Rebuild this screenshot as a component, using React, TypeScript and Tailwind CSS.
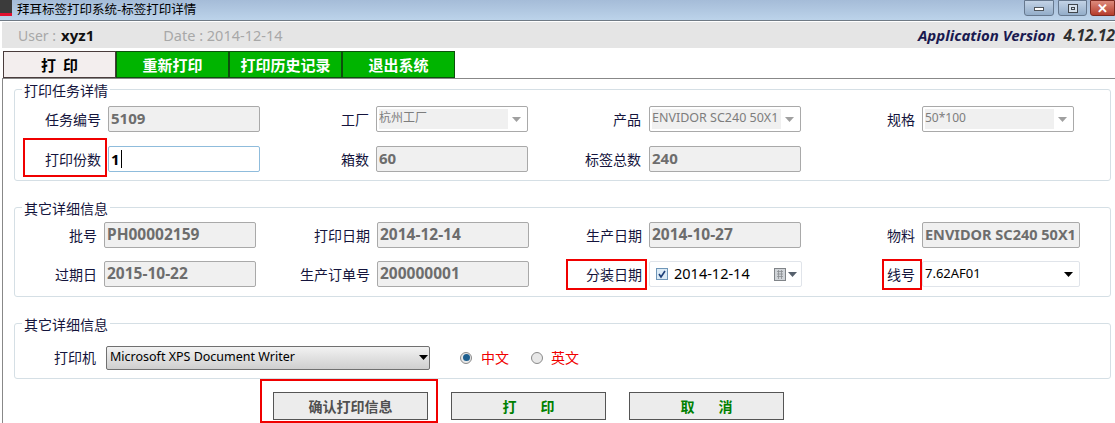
import type { ReactNode } from "react";

const cjk = "font-['Noto_Sans_CJK_SC','Noto_Sans',sans-serif]";
const latin = "font-['Noto_Sans','Noto_Sans_CJK_SC',sans-serif]";

function Arrow({ color = "#000" }: { color?: string }) {
  return (
    <svg width="9" height="5" viewBox="0 0 9 5">
      <path d="M0 0h9L4.5 5z" fill={color} />
    </svg>
  );
}

function Label({ width, gap = 7, children }: { width: number; gap?: number; children: ReactNode }) {
  return (
    <div
      className={`${cjk} shrink-0 text-right text-[14px] leading-[27px] text-[#14143c]`}
      style={{ width, marginRight: gap }}
    >
      {children}
    </div>
  );
}

function ReadOnly({ value, large }: { value: string; large?: boolean }) {
  return (
    <div
      className={`${latin} ${large ? "text-[15.5px]" : "text-[15px]"} h-[26px] w-[152px] shrink-0 overflow-hidden whitespace-nowrap rounded-[2px] border border-[#a9a9a9] bg-[#f0f0f0] pl-[2px] font-bold leading-[23px] text-[#6d6d6d]`}
    >
      {value}
    </div>
  );
}

function DisabledSelect({ value, large }: { value: string; large?: boolean }) {
  return (
    <div className="flex h-[26px] w-[152px] shrink-0 items-stretch rounded-[2px] border border-[#a9a9a9] bg-white p-[2px]">
      <div
        className={`${latin} ${large ? "text-[12.5px]" : "text-[12px]"} w-[129px] overflow-hidden whitespace-nowrap bg-[#f0f0f0] leading-[18px] text-[#7d7d7d]`}
      >
        {value}
      </div>
      <div className="flex flex-1 items-center justify-center">
        <Arrow color="#a0a0a0" />
      </div>
    </div>
  );
}

function Group({ title, className, children }: { title: string; className: string; children: ReactNode }) {
  return (
    <section className={`relative ml-[11px] w-[1097px] shrink-0 rounded-[3px] border border-[#d5dfe5] ${className}`}>
      <span className={`${cjk} absolute left-[7px] top-[-9px] bg-white px-[2px] text-[14px] leading-[19px] text-[#14143c]`}>
        {title}
      </span>
      {children}
    </section>
  );
}

function RedBox({ className }: { className: string }) {
  return <div className={`pointer-events-none absolute border-[2px] border-[#f00000] ${className}`} />;
}

function Radio({ checked }: { checked?: boolean }) {
  return (
    <span className="flex h-[12px] w-[12px] items-center justify-center rounded-full border border-[#8a8a8a] bg-[#e8e8e8]">
      {checked && <span className="h-[7px] w-[7px] rounded-full bg-[#1d5f8f]" />}
    </span>
  );
}

function ActionButton({ children, className }: { children: ReactNode; className: string }) {
  return (
    <button
      className={`${cjk} h-[28px] w-[155px] shrink-0 border border-[#555] bg-[#ececec] text-[14px] font-bold leading-[26px] ${className}`}
    >
      {children}
    </button>
  );
}

const tabs = ["重新打印", "打印历史记录", "退出系统"];

export default function App() {
  return (
    <div className="relative flex h-[423px] w-[1115px] flex-col overflow-hidden bg-white">
      {/* title bar */}
      <div className="flex h-[21px] shrink-0 items-start border-b border-[#6f7a85] bg-gradient-to-b from-[#a5bcd8] to-[#bcd3ea]">
        <div className="flex h-[16px] w-[12px] shrink-0 flex-col">
          <div className="flex-1 bg-[#3b3b3b]" />
          <div className="h-[3px] bg-[#e0102f]" />
        </div>
        <span className={`${cjk} ml-[5px] text-[12.5px] leading-[18px] text-black`}>拜耳标签打印系统-标签打印详情</span>
        <div className="ml-auto flex">
          <div className="mr-[4px] flex h-[16px] w-[30px] items-center justify-center rounded-b-[3px] border border-[#66788e] bg-gradient-to-b from-[#c3d3e6] to-[#93adc9]">
            <div className="mt-[2px] h-[4px] w-[10px] border border-[#50565c] bg-white" />
          </div>
          <div className="mr-[3px] flex h-[16px] w-[29px] items-center justify-center rounded-b-[3px] border border-[#66788e] bg-gradient-to-b from-[#c3d3e6] to-[#93adc9]">
            <div className="flex h-[9px] w-[10px] items-center justify-center border border-[#40464c] bg-[#d5e0ec]">
              <div className="h-[3px] w-[4px] border border-[#40464c]" />
            </div>
          </div>
          <div className="flex h-[16px] w-[25px] items-center justify-center rounded-bl-[3px] border border-[#7d2a20] bg-gradient-to-b from-[#dd8a7c] to-[#b53c2c] text-[13px] font-bold leading-none text-white">
            ✕
          </div>
        </div>
      </div>

      {/* user bar */}
      <div className={`${latin} ml-[2px] mt-[1px] flex h-[26px] shrink-0 items-center whitespace-nowrap bg-[#e5e5e5] pt-[1px] text-[14px]`}>
        <span className="ml-[16px] text-[#a8a8a8]">User :</span>
        <span className="ml-[5px] text-[15px] font-bold text-[#101010]">xyz1</span>
        <span className="ml-[69px] text-[14.5px] text-[#a8a8a8]">Date : 2014-12-14</span>
        <span className="ml-auto text-[15px] font-bold italic text-[#1a1a50]">Application Version</span>
        <span className="ml-[8px] text-[15.5px] font-bold italic text-[#303030]">4.12.12</span>
      </div>

      {/* tabs */}
      <div className={`${cjk} ml-[3px] mt-[3px] flex h-[27px] shrink-0 text-[15px] font-bold`}>
        <div className="h-full w-[113px] border border-[#4a3c3c] bg-[#f3eeee] text-center leading-[25px] text-black">打&nbsp;&nbsp;印</div>
        {tabs.map((t) => (
          <div
            key={t}
            className="h-full w-[113px] border border-[#0c4f0c] bg-[#00b400] text-center leading-[25px] text-white"
          >
            {t}
          </div>
        ))}
      </div>

      {/* main panel */}
      <div className="ml-[2px] flex flex-1 flex-col border-l border-t border-[#888888] pt-[10px]">
        <Group title="打印任务详情" className="h-[92px]">
          <div className="mt-[16px] flex">
            <Label width={86}>任务编号</Label>
            <ReadOnly value="5109" />
            <Label width={109}>工厂</Label>
            <DisabledSelect value="杭州工厂" />
            <Label width={113} gap={8}>产品</Label>
            <DisabledSelect value="ENVIDOR SC240 50X1" large />
            <Label width={114}>规格</Label>
            <DisabledSelect value="50*100" />
          </div>
          <div className="mt-[13px] flex">
            <Label width={86}>打印份数</Label>
            <div
              className={`${latin} flex h-[26px] w-[152px] shrink-0 items-center rounded-[2px] border border-[#8fbcdc] bg-white pl-[2px] text-[15px] font-bold text-black`}
            >
              1<span className="ml-[1px] h-[18px] w-px bg-black" />
            </div>
            <Label width={109}>箱数</Label>
            <ReadOnly value="60" />
            <Label width={113} gap={8}>标签总数</Label>
            <ReadOnly value="240" />
          </div>
          <RedBox className="left-[8px] top-[48px] h-[39px] w-[84px]" />
        </Group>

        <Group title="其它详细信息" className="mt-[26px] h-[90px]">
          <div className="mt-[14px] flex">
            <Label width={82}>批号</Label>
            <ReadOnly value="PH00002159" large />
            <Label width={114} gap={7}>打印日期</Label>
            <ReadOnly value="2014-12-14" large />
            <Label width={113} gap={7}>生产日期</Label>
            <ReadOnly value="2014-10-27" large />
            <Label width={114}>物料</Label>
            <div className="w-[158px] shrink-0">
              <div
                className={`${latin} h-[26px] overflow-hidden whitespace-nowrap rounded-[2px] border border-[#a9a9a9] bg-[#f0f0f0] pl-[2px] text-[14.5px] font-bold leading-[23px] text-[#6d6d6d]`}
              >
                ENVIDOR SC240 50X1
              </div>
            </div>
          </div>
          <div className="mt-[12px] flex">
            <Label width={82}>过期日</Label>
            <ReadOnly value="2015-10-22" large />
            <Label width={114} gap={7}>生产订单号</Label>
            <ReadOnly value="200000001" large />
            <Label width={113} gap={7}>分装日期</Label>
            <div
              className={`${latin} flex h-[26px] w-[153px] shrink-0 items-center rounded-[2px] border border-[#e0e4ea] bg-white pl-[6px] text-[14.5px] text-black`}
            >
              <span className="flex h-[12px] w-[12px] items-center justify-center border border-[#6f96b8] bg-[#dcebf6]">
                <svg width="10" height="10" viewBox="0 0 10 10">
                  <path d="M2 5l2 3 4-6" fill="none" stroke="#1c3f78" strokeWidth="1.6" />
                </svg>
              </span>
              <span className="ml-[6px]">2014-12-14</span>
              <svg className="ml-[24px]" width="12" height="13" viewBox="0 0 12 13">
                <rect x="0.5" y="0.5" width="11" height="12" fill="#d0d4d8" stroke="#808488" />
                <path d="M3 3.5h6M3 6h6M3 8.5h6M4.5 2v9M7.5 2v9" stroke="#8a8e92" strokeWidth="0.8" />
              </svg>
              <span className="ml-[2px] flex">
                <Arrow color="#56606c" />
              </span>
            </div>
            <Label width={113}>线号</Label>
            <div
              className={`${latin} flex h-[26px] w-[158px] shrink-0 items-center rounded-[2px] border border-[#e0e4ea] bg-white pl-[2px] pr-[6px] text-[13px] text-black`}
            >
              7.62AF01
              <span className="ml-auto flex">
                <Arrow />
              </span>
            </div>
          </div>
          <RedBox className="left-[551px] top-[51px] h-[31px] w-[81px]" />
          <RedBox className="left-[867px] top-[51px] h-[31px] w-[40px]" />
        </Group>

        <Group title="其它详细信息" className="mt-[26px] h-[56px]">
          <div className="mt-[20px] flex items-center">
            <Label width={81} gap={10}>打印机</Label>
            <div
              className={`${latin} flex h-[24px] w-[324px] shrink-0 items-center rounded-[2px] border border-[#707070] bg-gradient-to-b from-[#f2f2f2] to-[#cfcfcf] pl-[3px] pr-[1px] text-[12.5px] text-black`}
            >
              Microsoft XPS Document Writer
              <span className="ml-auto flex">
                <Arrow />
              </span>
            </div>
            <span className="ml-[30px] flex">
              <Radio checked />
            </span>
            <span className={`${cjk} ml-[9px] text-[14px] text-[#f00000]`}>中文</span>
            <span className="ml-[22px] flex">
              <Radio />
            </span>
            <span className={`${cjk} ml-[8px] text-[14px] text-[#f00000]`}>英文</span>
          </div>
        </Group>

        <div className="relative ml-[270px] mt-[13px] flex gap-[23px]">
          <ActionButton className="text-[#505050]">确认打印信息</ActionButton>
          <ActionButton className="text-[#008000]">
            <span className="mr-[24px]">打</span>印
          </ActionButton>
          <ActionButton className="text-[#008000]">
            <span className="mr-[24px]">取</span>消
          </ActionButton>
          <RedBox className="left-[-13px] top-[-13px] h-[44px] w-[178px]" />
        </div>
      </div>
    </div>
  );
}
